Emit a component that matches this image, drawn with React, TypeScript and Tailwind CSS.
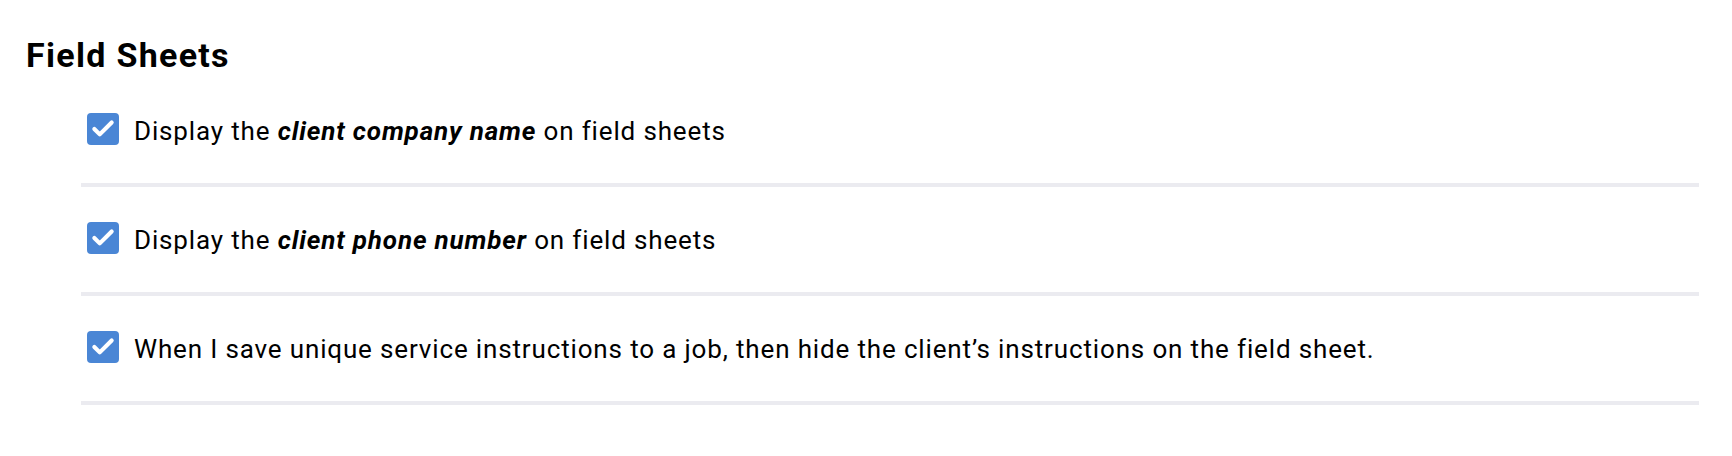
import { Check } from 'lucide-react';

const options = [
    {
        id: 'company',
        label: (
            <>
                Display the <b className="font-bold italic">client company name</b> on field sheets
            </>
        ),
    },
    {
        id: 'phone',
        label: (
            <>
                Display the <b className="font-bold italic">client phone number</b> on field sheets
            </>
        ),
    },
    {
        id: 'instructions',
        label: <>When I save unique service instructions to a job, then hide the client’s instructions on the field sheet.</>,
    },
];

function App() {
    return (
        <div className="w-[1732px] h-[456px] bg-white text-black font-['Roboto',sans-serif]">
            <div className="pl-[26px] pt-[34px]">
                <h2 className="text-[34px] leading-[42px] font-bold tracking-[1.3px]">Field Sheets</h2>
            </div>

            <ul className="ml-[81px] w-[1618px] mt-[2px]">
                {options.map((opt) => (
                    <li
                        key={opt.id}
                        className="flex items-center gap-[15px] pl-[6px] pt-[35px] pb-[38px] border-b-4 border-[#ebebf0]"
                    >
                        <span className="w-8 h-8 shrink-0 rounded-[4px] bg-[#4a86d5] flex items-center justify-center">
                            <Check size={26} strokeWidth={3.8} className="text-white" />
                        </span>
                        <span className="text-[26px] leading-[28px] tracking-[0.85px] pt-[4px]">{opt.label}</span>
                    </li>
                ))}
            </ul>
        </div>
    );
}

export default App;
